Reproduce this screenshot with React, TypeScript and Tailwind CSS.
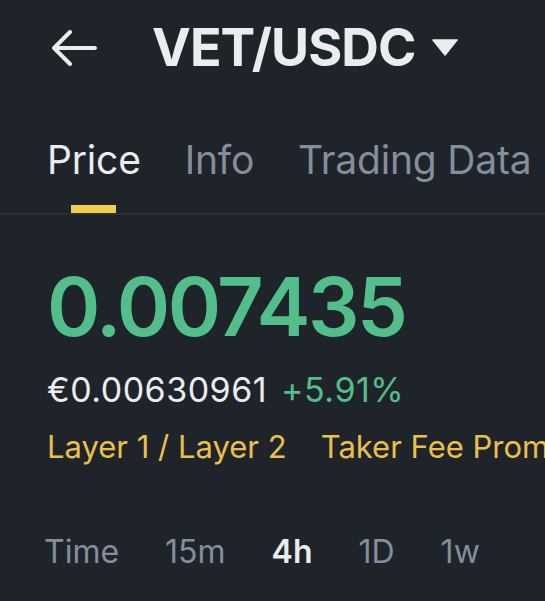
import React from 'react';

const font = { fontFamily: 'Inter, "Noto Sans", sans-serif' };

const tabs = ['Price', 'Info', 'Trading Data'];
const intervals = ['Time', '15m', '4h', '1D', '1w'];

const BackArrow: React.FC = () => (
  <svg width="46" height="36" viewBox="0 0 46 36" fill="none">
    <path
      d="M44 18H4M19 2L3 18l16 16"
      stroke="#eaecef"
      strokeWidth="4"
      strokeLinecap="round"
      strokeLinejoin="round"
    />
  </svg>
);

const App: React.FC = () => {
  return (
    <div className="w-[545px] h-[601px] overflow-hidden bg-[#1f232a] text-[#eaecef]" style={font}>
      {/* header */}
      <div className="h-[96px] flex items-center pl-[51px]">
        <BackArrow />
        <div className="ml-[55px] text-[52px] leading-[52px] font-bold tracking-[-0.9px] whitespace-nowrap">
          VET/USDC
        </div>
        <svg className="ml-[16px] mt-[-2px]" width="26" height="17" viewBox="0 0 26 17">
          <path d="M1 1h24L13 16z" fill="#eaecef" stroke="#eaecef" strokeWidth="1.5" strokeLinejoin="round" />
        </svg>
      </div>

      {/* tabs */}
      <div className="pt-[44px] flex gap-[44px] pl-[47px] border-b-2 border-[#2b3139] whitespace-nowrap">
        {tabs.map((t, i) => (
          <div key={t} className="flex flex-col items-center">
            <span
              className={`text-[39px] leading-[39px] tracking-[-0.2px] ${i === 0 ? 'text-[#eaecef]' : 'text-[#848e9c]'}`}
            >
              {t}
            </span>
            <div className={`mt-[26px] h-[8px] w-[45px] ${i === 0 ? 'bg-[#f0cf4d]' : 'bg-transparent'}`} />
          </div>
        ))}
      </div>

      {/* price */}
      <div className="pl-[47px] whitespace-nowrap">
        <div className="mt-[52px] text-[81px] leading-[81px] font-semibold tracking-[-2.5px] text-[#52be8a]">
          0.007435
        </div>
        <div className="mt-[25px] text-[34px] leading-[33px] tracking-[0.5px] flex gap-[14px]">
          <span className="text-[#eaecef]">€0.00630961</span>
          <span className="text-[#52be8a]">+5.91%</span>
        </div>
        <div className="mt-[25px] text-[31px] leading-[31px] flex items-center text-[#e9c049]">
          <span>Layer 1 / Layer 2</span>
          <span className="mx-[17px] w-[2px] h-[8px] bg-[#3c424b]" />
          <span>Taker Fee Promo</span>
        </div>
      </div>

      {/* intervals */}
      <div className="mt-[74px] pl-[44px] flex gap-[46px] whitespace-nowrap">
        {intervals.map((t) => (
          <span
            key={t}
            className={`text-[32px] leading-[32px] ${t === '4h' ? 'text-[#eaecef] font-semibold' : 'text-[#848e9c]'}`}
          >
            {t}
          </span>
        ))}
      </div>
    </div>
  );
};

export default App;
